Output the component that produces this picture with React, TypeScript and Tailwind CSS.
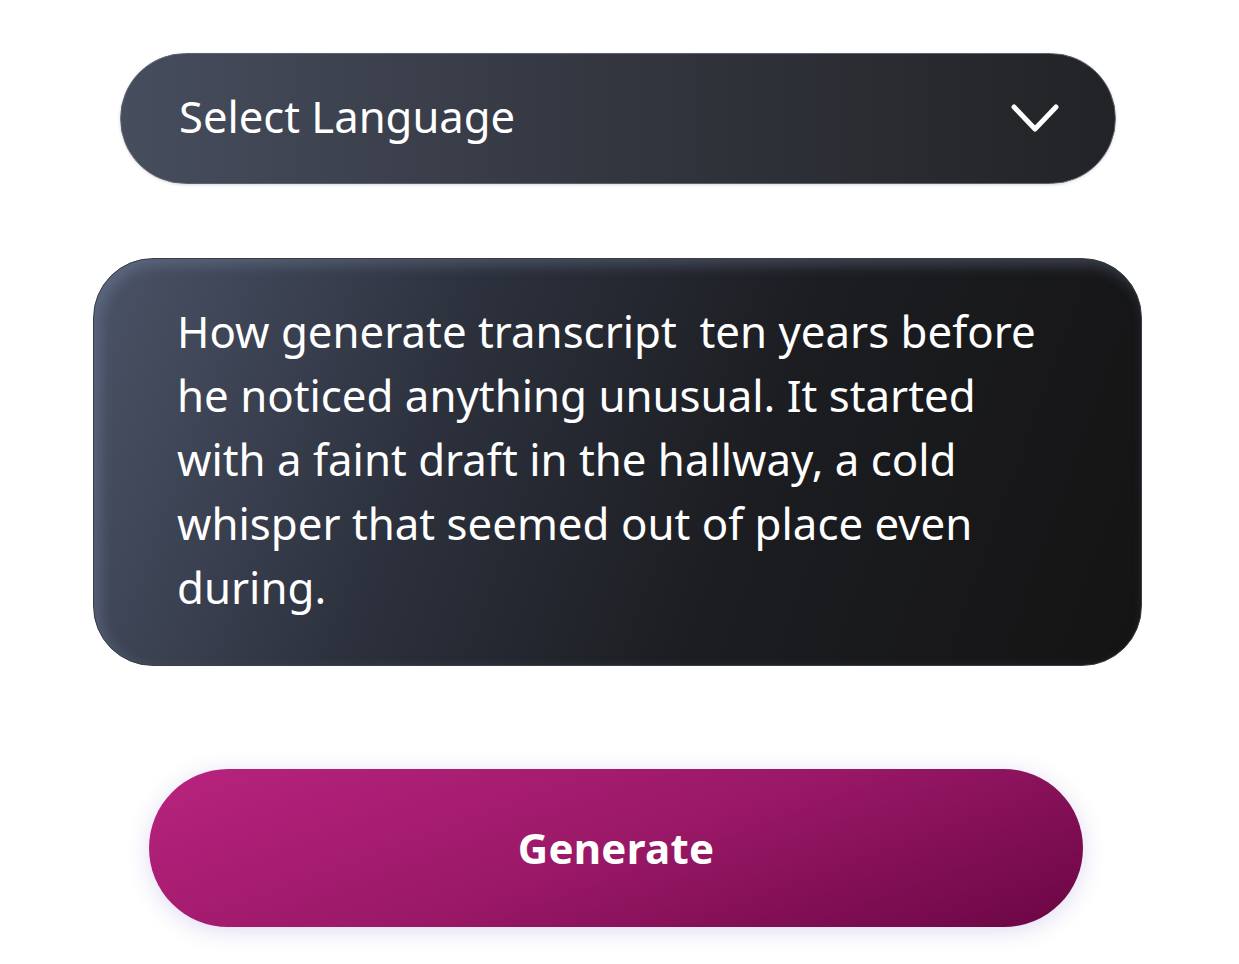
const lines = [
  'How generate transcript\u00a0 ten years before',
  'he noticed anything unusual. It started',
  'with a faint draft in the hallway, a cold',
  'whisper that seemed out of place even',
  'during.',
];

export default function App() {
  return (
    <div className="min-h-[964px] w-[1239px] bg-white pt-[53px] font-['Noto_Sans',sans-serif] text-white">
      <button
        type="button"
        className="ml-[120px] flex h-[131px] w-[996px] items-center justify-between rounded-full border border-[#5b6273] bg-gradient-to-r from-[#464d5d] via-[#33363f] to-[#222326] pl-[58px] pr-[56px] shadow-[0_1px_3px_rgba(0,0,0,0.15)]"
      >
        <span className="mb-[4px] text-[43.6px] leading-none">Select Language</span>
        <svg width="48" height="30" viewBox="0 0 48 30" fill="none">
          <polyline
            points="3,3 24,25 45,3"
            stroke="white"
            strokeWidth="5"
            strokeLinecap="round"
            strokeLinejoin="round"
          />
        </svg>
      </button>

      <div className="ml-[93px] mt-[74px] h-[408px] w-[1049px] rounded-[60px] border border-[#3a3d44] bg-[linear-gradient(110deg,#4b5367_0%,#2c313d_33%,#1c1d21_62%,#141414_100%)] pl-[83px] pt-[40px] shadow-[inset_6px_6px_14px_rgba(130,145,180,0.35)]">
        {lines.map((l) => (
          <p key={l} className="whitespace-pre text-[43.8px] leading-[64px]">
            {l}
          </p>
        ))}
      </div>

      <button
        type="button"
        className="ml-[149px] mt-[103px] flex h-[158px] w-[934px] items-center justify-center rounded-full bg-[linear-gradient(160deg,#b8237f_0%,#9a1867_50%,#6a0644_100%)] shadow-[0_4px_22px_rgba(110,90,190,0.22)]"
      >
        <span className="text-[42px] font-bold leading-none tracking-[0.3px]">Generate</span>
      </button>
    </div>
  );
}
